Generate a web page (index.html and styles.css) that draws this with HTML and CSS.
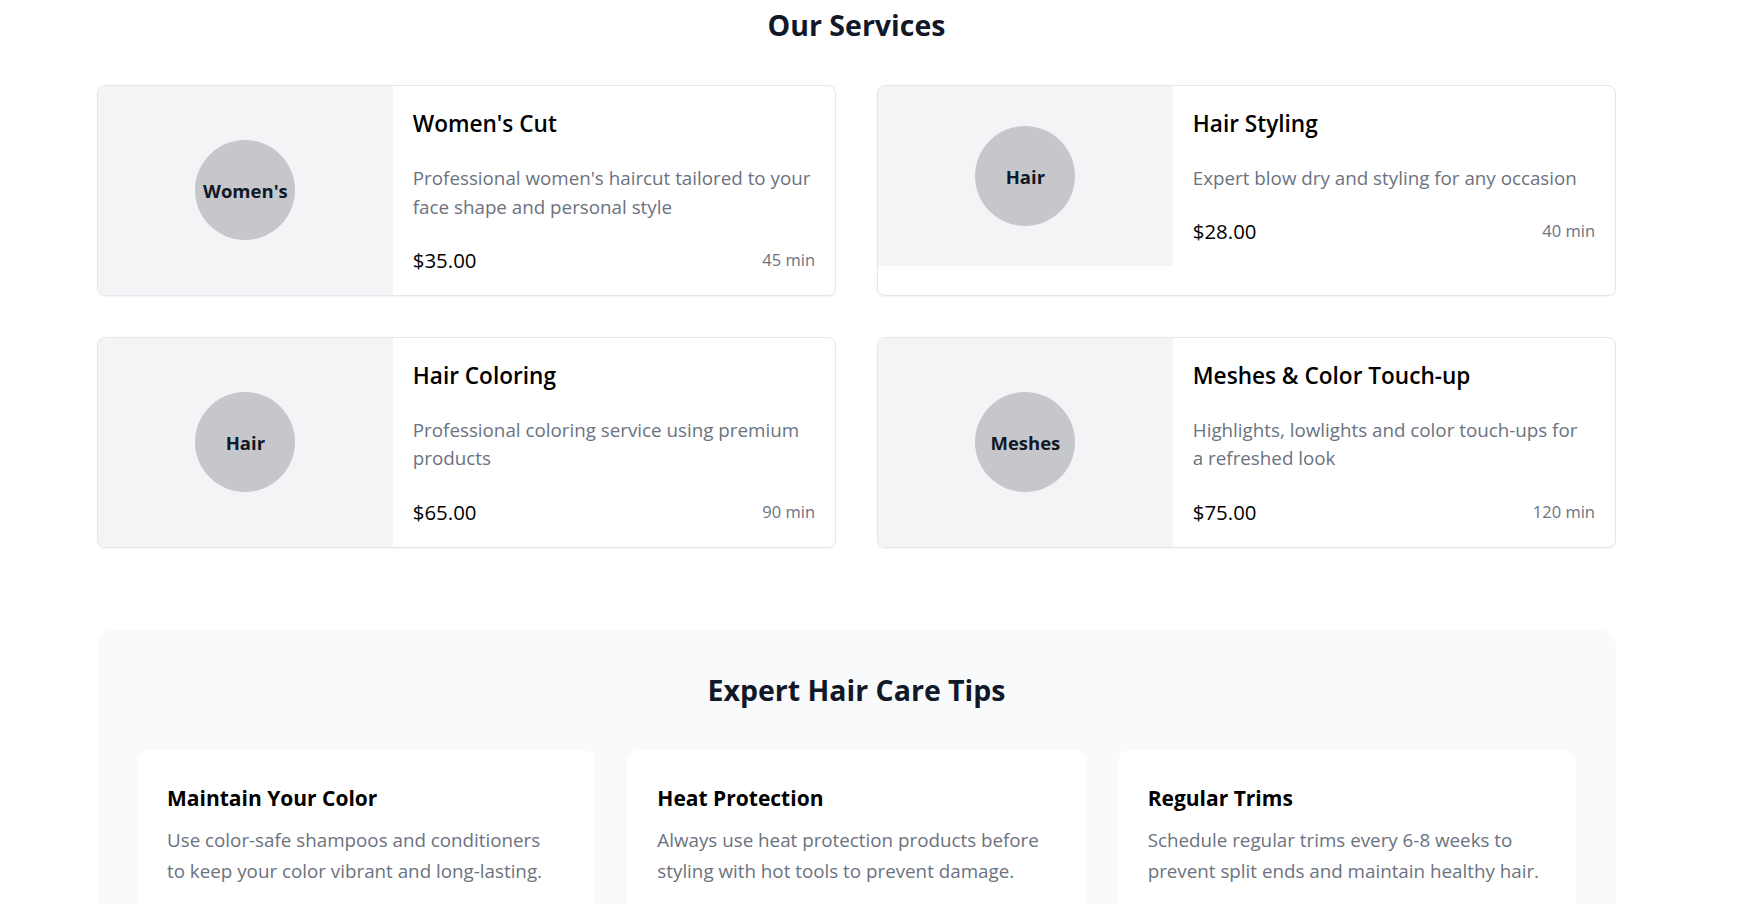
FILE: index.html
```html
<!DOCTYPE html>
<html lang="en">
<head>
<meta charset="utf-8">
<title>Our Services</title>
<link rel="stylesheet" href="styles.css">
</head>
<body>
<main class="page">
  <section class="services">
    <h2 class="section-title">Our Services</h2>
    <div class="service-grid">
      <article class="service-card">
        <div class="service-inner">
          <div class="service-media"><div class="badge">Women's</div></div>
          <div class="service-body">
            <h3 class="service-name">Women's Cut</h3>
            <p class="service-desc">Professional women's haircut tailored to your face shape and personal style</p>
            <div class="service-meta"><span class="price">$35.00</span><span class="duration">45 min</span></div>
          </div>
        </div>
      </article>
      <article class="service-card">
        <div class="service-inner">
          <div class="service-media"><div class="badge">Hair</div></div>
          <div class="service-body">
            <h3 class="service-name">Hair Styling</h3>
            <p class="service-desc">Expert blow dry and styling for any occasion</p>
            <div class="service-meta"><span class="price">$28.00</span><span class="duration">40 min</span></div>
          </div>
        </div>
      </article>
      <article class="service-card">
        <div class="service-inner">
          <div class="service-media"><div class="badge">Hair</div></div>
          <div class="service-body">
            <h3 class="service-name">Hair Coloring</h3>
            <p class="service-desc">Professional coloring service using premium products</p>
            <div class="service-meta"><span class="price">$65.00</span><span class="duration">90 min</span></div>
          </div>
        </div>
      </article>
      <article class="service-card">
        <div class="service-inner">
          <div class="service-media"><div class="badge">Meshes</div></div>
          <div class="service-body">
            <h3 class="service-name">Meshes &amp; Color Touch-up</h3>
            <p class="service-desc">Highlights, lowlights and color touch-ups for a&nbsp;refreshed look</p>
            <div class="service-meta"><span class="price">$75.00</span><span class="duration">120 min</span></div>
          </div>
        </div>
      </article>
    </div>
  </section>

  <section class="tips">
    <h2 class="tips-title">Expert Hair Care Tips</h2>
    <div class="tips-grid">
      <div class="tip-card">
        <h3 class="tip-name">Maintain Your Color</h3>
        <p class="tip-desc">Use color-safe shampoos and conditioners to&nbsp;keep your color vibrant and long-lasting.</p>
      </div>
      <div class="tip-card">
        <h3 class="tip-name">Heat Protection</h3>
        <p class="tip-desc">Always use heat protection products before styling with hot tools to prevent damage.</p>
      </div>
      <div class="tip-card">
        <h3 class="tip-name">Regular Trims</h3>
        <p class="tip-desc">Schedule regular trims every 6-8 weeks to prevent split ends and maintain healthy hair.</p>
      </div>
    </div>
  </section>
</main>
</body>
</html>
```

FILE: styles.css
```css
* { box-sizing: border-box; }

html, body {
  margin: 0;
  padding: 0;
  background: #ffffff;
}

body {
  font-family: "Open Sans", "Noto Sans", "Liberation Sans", sans-serif;
  color: #000000;
}

.page {
  width: 1616px;
  padding: 7px 0 40px 97px;
}

.section-title {
  margin: 0 0 42px;
  font-size: 28.5px;
  line-height: 36px;
  font-weight: 700;
  color: #111827;
  text-align: center;
}

.service-grid {
  display: grid;
  grid-template-columns: 1fr 1fr;
  column-gap: 41px;
  row-gap: 41px;
}

.service-card {
  background: #ffffff;
  border: 1px solid #e5e7eb;
  border-radius: 8px;
  overflow: hidden;
  box-shadow: 0 1px 2px rgba(0, 0, 0, 0.05);
}

.service-inner {
  display: flex;
}

.service-media {
  flex: 0 0 40%;
  background: #f3f4f6;
  display: flex;
  align-items: center;
  justify-content: center;
}

.badge {
  width: 100px;
  height: 100px;
  border-radius: 50%;
  background: #c5c7cb;
  display: flex;
  align-items: center;
  justify-content: center;
  font-size: 18.5px;
  font-weight: 700;
  color: #111827;
}

.service-body {
  flex: 1 1 auto;
  padding: 20px;
}

.service-name {
  margin: 0 0 22px;
  font-size: 22.6px;
  line-height: 36px;
  font-weight: 600;
  color: #000000;
}

.service-desc {
  margin: 0 0 23.6px;
  font-size: 18.8px;
  line-height: 28.6px;
  color: #6b7280;
}

.service-meta {
  display: flex;
  justify-content: space-between;
  align-items: center;
}

.price {
  font-size: 20.4px;
  line-height: 30px;
  color: #000000;
}

.duration {
  font-size: 16.5px;
  line-height: 24px;
  color: #6b7280;
}

.tips {
  margin-top: 82px;
  background: #f9fafb;
  border-radius: 16px;
  padding: 40px;
}

.tips-title {
  margin: 0 0 40px;
  font-size: 28.5px;
  line-height: 40px;
  font-weight: 700;
  color: #111827;
  text-align: center;
}

.tips-grid {
  display: grid;
  grid-template-columns: repeat(3, 1fr);
  gap: 32px;
}

.tip-card {
  background: #ffffff;
  border-radius: 12px;
  padding: 30px 31px 30px 30px;
  box-shadow: 0 1px 2px rgba(0, 0, 0, 0.03);
}

.tip-name {
  margin: 0 0 9px;
  font-size: 21px;
  line-height: 36px;
  font-weight: 700;
  color: #000000;
}

.tip-desc {
  margin: 0;
  font-size: 18.8px;
  line-height: 31px;
  color: #6b7280;
}
```
